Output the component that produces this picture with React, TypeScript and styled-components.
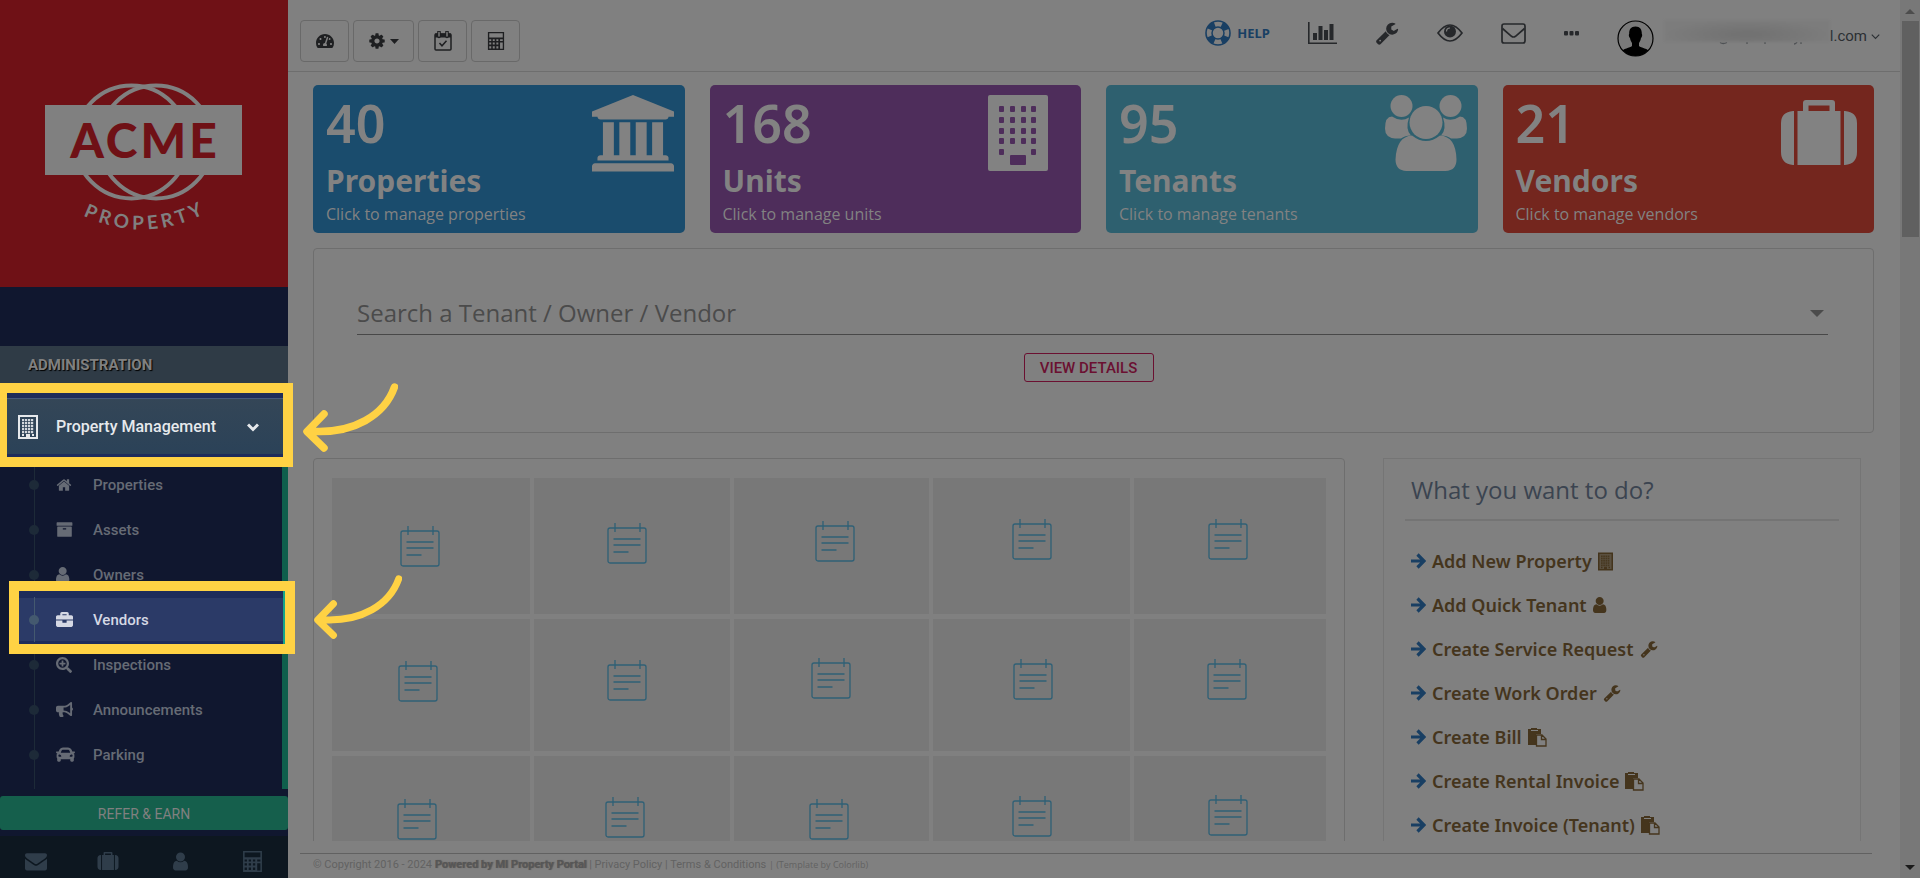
import React from "react";
import styled, { createGlobalStyle } from "styled-components";
import { FaTachometerAlt, FaBriefcase, FaBullhorn, FaCar, FaSearchPlus } from "react-icons/fa";

const sans = `"Noto Sans", "Open Sans", sans-serif`;
const sansText = `"Open Sans", "Noto Sans", sans-serif`;
const roboto = `Roboto, "Liberation Sans", sans-serif`;

const c = {
  page: "#808080",
  navy: "#10172f",
  navyLit: "#1e2c5a",
  line: "#6e6e6e",
  ink: "#1e1f21",
  amber: "#ffd244",
  brown: "#45351d",
  blue: "#193f63",
  crimson: "#6b1031",
};

const GlobalStyle = createGlobalStyle`
  * { box-sizing: border-box; }
  body { margin: 0; background: ${c.page}; font-family: ${roboto}; overflow: hidden; }
  button { font: inherit; color: inherit; padding: 0; margin: 0; border: 0; background: none; cursor: pointer; }
  a { color: inherit; text-decoration: none; }
  ul { list-style: none; margin: 0; padding: 0; }
  svg { display: block; flex: none; }
`;

/* ---------- icons ---------- */

const glyphs = {
  bank: "M960 0l960 384v128h-128q0 26-20.5 45t-48.5 19h-1526q-28 0-48.5-19t-20.5-45h-128v-128zm-704 640h256v768h128v-768h256v768h128v-768h256v768h128v-768h256v768h59q28 0 48.500 19t20.500 45v64h-1664v-64q0-26 20.500-45t48.500-19h59v-768zm1595 960q28 0 48.500 19t20.500 45v128h-1920v-128q0-26 20.500-45t48.500-19h1782z",
  wrench: "M448 1472q0-26-19-45t-45-19-45 19-19 45 19 45 45 19 45-19 19-45zm644-420l-682 682q-37 37-90 37-52 0-91-37l-106-108q-38-36-38-90 0-53 38-91l681-681q39 98 114.500 173.500t173.500 114.500zm634-435q0 39-23 106-47 134-164.500 217.500t-258.500 83.500q-185 0-316.500-131.500t-131.500-316.500 131.500-316.500 316.500-131.500q58 0 121.500 16.500t107.500 46.500q16 11 16 28t-16 28l-293 169v224l193 107q5-3 79-48.500t135.500-81 70.500-35.500q15 0 23.500 10t8.500 25z",
  envelope: "M1792 710v794q0 66-47 113t-113 47h-1472q-66 0-113-47t-47-113v-794q44 49 101 87 362 246 497 345 57 42 92.500 65.500t94.500 48 110 24.500h2q51 0 110-24.500t94.500-48 92.500-65.500q170-123 498-345 57-39 100-87zm0-294q0 79-49 151t-122 123q-376 261-468 325-10 7-42.500 31t-54 38-52 32.500-57.500 27-50 9h-2q-23 0-50-9t-57.500-27-52-32.500-54-38-42.500-31q-91-64-262-182.500t-205-142.500q-62-42-117-115.500t-55-136.500q0-78 41.500-130t118.500-52h1472q65 0 112.500 47t47.500 113z",
  user: "M1536 1399q0 109-62.500 187t-150.500 78h-854q-88 0-150.500-78t-62.500-187q0-85 8.500-160.500t31.500-152 58.500-131 94-89 134.500-34.500q131 128 313 128t313-128q76 0 134.500 34.500t94 89 58.500 131 31.500 152 8.500 160.500zm-256-887q0 159-112.500 271.500t-271.500 112.500-271.500-112.500-112.500-271.500 112.500-271.500 271.500-112.500 271.500 112.500 112.500 271.500z",
  home: "M1472 992v480q0 26-19 45t-45 19h-384v-384h-256v384h-384q-26 0-45-19t-19-45v-480q0-1 .5-3t.5-3l575-474 575 474q1 2 1 6zm223-69l-62 74q-8 9-21 11h-3q-13 0-21-7l-692-577-692 577q-12 8-24 7-13-2-21-11l-62-74q-8-10-7-23.500t11-21.500l719-599q32-26 76-26t76 26l244 204v-195q0-14 9-23t23-9h192q14 0 23 9t9 23v408l219 182q10 8 11 21.500t-7 23.500z",
  archive: "M1088 832q0-26-19-45t-45-19h-256q-26 0-45 19t-19 45 19 45 45 19h256q26 0 45-19t19-45zm576-192v960q0 26-19 45t-45 19h-1408q-26 0-45-19t-19-45v-960q0-26 19-45t45-19h1408q26 0 45 19t19 45zm64-448v256q0 26-19 45t-45 19h-1536q-26 0-45-19t-19-45v-256q0-26 19-45t45-19h1536q26 0 45 19t19 45z",
  cog: "M1152 896q0-106-75-181t-181-75-181 75-75 181 75 181 181 75 181-75 75-181zm512-109v222q0 12-8 23t-20 13l-185 28q-19 54-39 91 35 50 107 138 10 12 10 25t-9 23q-27 37-99 108t-94 71q-12 0-26-9l-138-108q-44 23-91 38-16 136-29 186-7 28-36 28h-222q-14 0-24.500-8.500t-11.500-21.500l-28-184q-49-16-90-37l-141 107q-10 9-25 9-14 0-25-11-126-114-165-168-7-10-7-23 0-12 8-23 15-21 51-66.500t54-70.500q-27-50-41-99l-183-27q-13-2-21-12.500t-8-23.500v-222q0-12 8-23t19-13l186-28q14-46 39-92-40-57-107-138-10-12-10-24 0-10 9-23 26-36 98.500-107.500t94.500-71.500q13 0 26 10l138 107q44-23 91-38 16-136 29-186 7-28 36-28h222q14 0 24.500 8.500t11.500 21.500l28 184q49 16 90 37l142-107q9-9 24-9 13 0 25 10 129 119 165 170 7 8 7 22 0 12-8 23-15 21-51 66.500t-54 70.500q26 50 41 98l183 28q13 2 21 12.500t8 23.500z",
};

const Glyph = ({ name, size, box = "0 0 1792 1792" }: { name: keyof typeof glyphs; size: number; box?: string }) => (
  <svg width={size} height={size} viewBox={box} fill="currentColor" aria-hidden="true">
    <path d={glyphs[name]} />
  </svg>
);

const CalculatorIcon = ({ size }: { size: number }) => (
  <svg width={size} height={size} viewBox="0 0 20 20" fill="currentColor" aria-hidden="true">
    <path fillRule="evenodd" d="M1 0h18v20H1zM2.500 1.500v4.500h15V1.500zM2.500 8v2h2.200V8zm3.900 0v2h2.200V8zm4 0v2h2.200V8zm4.100 0v2h3V8zM2.500 11.600v2.200h2.200v-2.200zm3.900 0v2.200h2.200v-2.200zm4 0v2.200h2.200v-2.200zm4.100 0v6.900h3v-6.900zM2.500 15.700v2.500h2.200v-2.500zm3.900 0v2.500h2.200v-2.500zm4 0v2.500h2.200v-2.500z" />
  </svg>
);

const CalendarCheckIcon = () => (
  <svg width="18" height="20" viewBox="0 0 18 20" fill="none" stroke="currentColor" aria-hidden="true">
    <rect x="1" y="3" width="16" height="16" rx="1" strokeWidth="1.500" />
    <path d="M1 4.500h16" strokeWidth="4" />
    <path d="M5 1v4.500M13 1v4.500" strokeWidth="3.600" strokeLinecap="round" />
    <path d="M5 1.500v3.500M13 1.500v3.500" strokeWidth="1.400" stroke={c.page} strokeLinecap="round" />
    <path d="M5.500 12l2.500 2.800 4.500-5" strokeWidth="1.500" />
  </svg>
);

const BuildingGrid = ({ width, height, solid }: { width: number; height: number; solid?: boolean }) => (
  <svg width={width} height={height} viewBox="0 0 20 24" aria-hidden="true">
    <rect x="1" y="1" width="18" height="22" fill="none" stroke="currentColor" strokeWidth="2" />
    {solid && <rect x="1" y="1" width="18" height="22" fill="currentColor" opacity="0.65" />}
    {[4, 7, 10, 13, 16].map((y) =>
      [4, 7, 10, 13].map((x) => <rect key={`${x}-${y}`} x={x} y={y} width="2.200" height="2.200" fill="currentColor" opacity="0.9" />),
    )}
    <path d="M8 23v-4h4v4zM4 19h2v2H4zM14 19h2v2h-2z" fill="currentColor" />
  </svg>
);

const TowerIcon = () => (
  <svg width="60" height="76" viewBox="0 0 60 76" aria-hidden="true">
    <rect width="60" height="76" rx="2" fill="currentColor" />
    <g fill="#4e2d5b">
      {[11, 22, 33, 43, 54].map((y, row) =>
        [11, 22, 33, 43].map((x, col) =>
          row === 4 && (col === 1 || col === 2) ? null : <rect key={`${x}-${y}`} x={x} y={y} width="5" height="6" rx="1" />,
        ),
      )}
      <rect x="22" y="60" width="16" height="10" rx="1" />
    </g>
  </svg>
);

const GroupIcon = () => (
  <svg width="82" height="76" viewBox="0 0 82 76" fill="currentColor" aria-hidden="true">
    <circle cx="16.500" cy="11" r="11" />
    <circle cx="65.500" cy="11" r="11" />
    <path d="M7 21.500q9 6 17 1q-4 12 2 18q-6 0-10 3H10q-10-1-10-10 0-12 7-12zM75 21.500q-9 6-17 1q4 12-2 18q6 0 10 3h6q10-1 10-10 0-12-7-12z" />
    <circle cx="41" cy="27.500" r="16.500" />
    <path d="M27 40.500q14 11 28 0 16 1 16.500 24 0 11-11 11.500h-39q-11-.5-11-11.500 1-23 16.500-24z" />
  </svg>
);

const SuitcaseIcon = ({ width, height }: { width: number; height: number }) => (
  <svg width={width} height={height} viewBox="0 0 76 65" fill="currentColor" aria-hidden="true">
    <path d="M12 11h1v54h-1q-12-1-12-13V23q0-11 12-12zM64 11h-1v54h1q12-1 12-13V23q0-11-12-12z" />
    <path fillRule="evenodd" d="M16.500 11H22V3q0-3 3-3h26q3 0 3 3v8h5.500v54h-43zM27.500 5.500v5.500h21V5.500z" />
  </svg>
);

const LifeRing = () => (
  <svg width="26" height="26" viewBox="0 0 26 26" fill="none" stroke="currentColor" aria-hidden="true">
    <circle cx="13" cy="13" r="12" strokeWidth="1.600" />
    <circle cx="13" cy="13" r="6" strokeWidth="1.500" />
    <circle cx="13" cy="13" r="9" strokeWidth="6" strokeDasharray="7.070 7.070" strokeDashoffset="-3.530" />
  </svg>
);

const BarChartIcon = () => (
  <svg width="29" height="22" viewBox="0 0 29 22" fill="currentColor" aria-hidden="true">
    <path d="M0 0h1.600v20.400H29V22H0zM5 11h4v7H5zM10.500 4h4v14h-4zM16 8h4v10h-4zM21.500 2h4v16h-4z" />
  </svg>
);

const MailIcon = () => (
  <svg width="25" height="21" viewBox="0 0 25 21" fill="none" stroke="currentColor" strokeWidth="1.700" aria-hidden="true">
    <rect x="1" y="1" width="23" height="19" rx="2" />
    <path d="M1.500 5.500l9 7.800q2 1.400 4 0l9-7.800" />
  </svg>
);

const EyeIcon = () => (
  <svg width="26" height="18" viewBox="0 0 26 18" aria-hidden="true">
    <path d="M1 9q12-16 24 0q-12 16-24 0z" fill="none" stroke="currentColor" strokeWidth="1.700" />
    <circle cx="13" cy="7.500" r="6" fill="currentColor" />
    <path d="M9.500 7.500q0-3.500 3.500-3.500" fill="none" stroke={c.page} strokeWidth="1.200" />
  </svg>
);

const DotsIcon = () => (
  <svg width="15" height="5" viewBox="0 0 15 5" fill="currentColor" aria-hidden="true">
    <rect width="4" height="4.500" rx="1" />
    <rect x="5.500" width="4" height="4.500" rx="1" />
    <rect x="11" width="4" height="4.500" rx="1" />
  </svg>
);

const PasteIcon = () => (
  <svg width="19" height="19" viewBox="0 0 19 19" aria-hidden="true">
    <path d="M0 1h3V0h6v1h4v5H8v11H0z" fill="currentColor" />
    <path d="M3 2.500h7" stroke={c.page} />
    <path d="M8.500 7h5.500l4 4v7H8.500zM13.500 7v4.500H18" fill={c.page} stroke="currentColor" strokeWidth="1.300" />
  </svg>
);

const GoArrow = () => (
  <svg width="15" height="16" viewBox="0 0 15 16" fill="none" stroke="currentColor" strokeWidth="3.200" aria-hidden="true">
    <path d="M0 8h12M6.500 1.500L13 8l-6.500 6.500" />
  </svg>
);

const GlobeTop = () => (
  <svg width="22" height="22" viewBox="0 0 22 22" fill="currentColor" aria-hidden="true">
    <circle cx="11" cy="11" r="11" />
  </svg>
);

const NoteIcon = () => (
  <svg width="40" height="41" viewBox="0 0 40 41" fill="none" stroke="#2f6076" aria-hidden="true">
    <rect x="1" y="5" width="38" height="35" rx="2" strokeWidth="1.300" />
    <path d="M8 0v9M33 0v9" strokeWidth="1.300" />
    <path d="M6.500 16h27M6.500 22h27M6.500 29h15" strokeWidth="1.600" />
  </svg>
);

const Caret = ({ width, height }: { width: number; height: number }) => (
  <svg width={width} height={height} viewBox="0 0 10 6" preserveAspectRatio="none" fill="currentColor" aria-hidden="true">
    <path d="M0 0h10L5 6z" />
  </svg>
);

const Chevron = ({ size, weight }: { size: number; weight: number }) => (
  <svg width={size} height={size} viewBox="0 0 12 12" fill="none" stroke="currentColor" strokeWidth={weight} aria-hidden="true">
    <path d="M1 3.500l5 5 5-5" />
  </svg>
);

const Avatar = () => (
  <svg width="37" height="37" viewBox="0 0 37 37" role="img" aria-label="User">
    <clipPath id="face"><circle cx="18.500" cy="18.500" r="17.500" /></clipPath>
    <circle cx="18.500" cy="18.500" r="17.500" fill="#7a7a7a" stroke="#000" strokeWidth="1.200" />
    <path clipPath="url(#face)" d="M18.500 6.500c5 0 6.500 3.500 6.300 7.500.8 1 .2 3.500-.8 4-.5 3-1.500 4-2 5v3c2 2 9 2 11.500 7V38h-30v-5c2.500-5 9.500-5 11.500-7v-3c-.5-1-1.500-2-2-5-1-.5-1.600-3-.8-4-.2-4 1.300-7.500 6.300-7.500z" />
  </svg>
);

const ArrowSvg = styled.svg<{ $x: number; $y: number }>`
  position: absolute;
  left: ${(p) => p.$x}px;
  top: ${(p) => p.$y}px;
  pointer-events: none;
`;

const PointerArrow = ({ x, y, width, height }: { x: number; y: number; width: number; height: number }) => (
  <ArrowSvg $x={x} $y={y} width={width} height={height} viewBox="0 0 95 69" fill="none" stroke={c.amber} strokeWidth="7.500" strokeLinecap="round" strokeLinejoin="round" aria-hidden="true">
    <path d="M91.500 4C82 31 52 52 5 48M21 31L4 48.500 21 65" />
  </ArrowSvg>
);

/* ---------- frame ---------- */

const Page = styled.div`
  display: flex;
  height: 100vh;
  background: ${c.page};
`;

const Sidebar = styled.aside`
  position: relative;
  z-index: 2;
  display: flex;
  flex-direction: column;
  flex: none;
  width: 288px;
  background: ${c.navy};
`;

const Brand = styled.a`
  height: 287px;
  margin-bottom: 59px;
  background: #6f1116;
`;

const SectionTitle = styled.h2`
  flex: none;
  margin: 0;
  padding: 0 28px;
  height: 37px;
  line-height: 38px;
  background: #2f3b46;
  color: #808080;
  font-size: 15px;
  font-weight: 700;
  text-shadow: 1px 1px 1px #000;
`;

const MenuHead = styled.button`
  position: relative;
  z-index: 2;
  flex: none;
  height: 79px;
  text-align: left;
  display: flex;
`;

const HeadCallout = styled.span`
  display: flex;
  flex: none;
  width: 293px;
  height: 84px;
  border: 10px solid ${c.amber};
  border-left-width: 7px;
  padding: 5px 0 3px;
  background: ${c.navyLit};
`;

const HeadInner = styled.span`
  display: flex;
  align-items: center;
  flex: 1;
  padding: 0 24px 0 11px;
  border-top: 1px solid #46597a;
  background: linear-gradient(#344657, #2b4258);
  color: #e6e9ec;
  font-size: 16px;
  font-weight: 500;

  span { flex: 1; padding-left: 18px; }
`;

const Menu = styled.ul`
  position: relative;
  flex: 1;
  min-height: 0;
  overflow-x: visible;
  overflow-y: clip;
  border-right: 6px solid #0f5f4c;
`;

const Item = styled.li<{ $raised?: boolean }>`
  position: relative;
  z-index: ${(p) => (p.$raised ? 1 : 0)};
  height: 45px;
`;

const Callout = styled.span`
  position: absolute;
  left: 9px;
  top: -16px;
  width: 286px;
  height: 73px;
  border: 10px solid ${c.amber};
  background:
    linear-gradient(#17a589, #17a589) right / 2px 100% no-repeat,
    linear-gradient(${c.navyLit} 7px, #2b3a67 7px, #2b3a67 50px, ${c.navyLit} 50px);
`;

const ItemLink = styled.a<{ $lit?: boolean }>`
  position: relative;
  display: flex;
  align-items: center;
  height: 100%;
  padding-left: 29px;
  font-size: 15px;
  font-weight: 500;
  color: ${(p) => (p.$lit ? "#d5d8e4" : "#666b75")};
`;

const Rail = styled.span<{ $lit?: boolean }>`
  display: flex;
  align-items: center;
  justify-content: center;
  align-self: stretch;
  width: 10px;
  margin-right: 17px;
  color: ${(p) => (p.$lit ? "#44596f" : "#1d2a38")};
  background: linear-gradient(currentColor, currentColor) center / 1px 100% no-repeat;

  &::after {
    content: "";
    width: 10px;
    height: 10px;
    border-radius: 50%;
    background: currentColor;
  }
`;

const ItemIcon = styled.span`
  display: flex;
  width: 37px;
`;

const Refer = styled.button`
  flex: none;
  height: 34px;
  margin: 7px 0 6px;
  padding-top: 2px;
  border-radius: 3px;
  background: #155f4c;
  color: #808080;
  font-size: 14px;
`;

const Dock = styled.nav`
  flex: none;
  display: grid;
  grid-template-columns: repeat(4, 1fr);
  height: 42px;
  padding-top: 8px;
  background: #0d1720;
  color: #2f3d4a;

  a { display: flex; align-items: center; justify-content: center; }
`;

const Main = styled.main`
  flex: 1;
  min-width: 0;
  display: flex;
  flex-direction: column;
`;

const TopBar = styled.header`
  flex: none;
  display: flex;
  justify-content: space-between;
  height: 72px;
  padding: 20px 20px 0 12px;
  border-bottom: 1px solid ${c.line};
`;

const Tools = styled.div`
  display: flex;
  gap: 4px;
`;

const ToolButton = styled.button<{ $wide?: boolean }>`
  display: flex;
  align-items: center;
  justify-content: center;
  gap: 4px;
  width: ${(p) => (p.$wide ? 61 : 49)}px;
  height: 42px;
  border: 1px solid #696969;
  border-radius: 4px;
  color: ${c.ink};
`;

const Links = styled.nav`
  display: flex;
  align-items: flex-start;
  gap: 38px;
  color: #26282b;
`;

const TopLink = styled.a`
  display: flex;
  align-items: center;
  height: 26px;
`;

const HelpLink = styled(TopLink)`
  gap: 6px;
  color: ${c.blue};
  font: 700 13px/26px ${sans};
`;

const Account = styled.button`
  display: flex;
  align-items: flex-start;
  color: #2b2f33;
  font-size: 15px;
  line-height: 32px;
`;

const HiddenAddress = styled.span`
  display: flex;
  flex-direction: column;
  margin-left: 10px;
  color: #4c4f52;
`;

const Redacted = styled.span`
  width: 166px;
  height: 22px;
  background: radial-gradient(ellipse at 50% 65%, #727272 10%, transparent 70%), #7c7c7c;
  filter: blur(1px);
`;

const AccountText = styled.span`
  display: flex;
  align-items: center;
  gap: 4px;
`;

const Body = styled.div`
  flex: 1;
  min-height: 0;
  display: flex;
  flex-direction: column;
  padding: 13px 26px 0 25px;
  overflow: hidden;
`;

const Cards = styled.section`
  flex: none;
  display: grid;
  grid-template-columns: repeat(4, 1fr);
  gap: 25px;
`;

const Card = styled.a<{ $color: string }>`
  display: flex;
  justify-content: space-between;
  height: 148px;
  padding: 10px 12px 0 13px;
  border-radius: 5px;
  background: ${(p) => p.$color};
  color: #828282;
  font-family: ${sansText};
`;

const Count = styled.strong`
  display: block;
  font-family: ${sans};
  font-size: 52px;
  font-weight: 600;
  line-height: 56px;
`;

const CardTitle = styled.span`
  display: block;
  margin-top: 10px;
  font-family: ${sans};
  font-size: 30px;
  line-height: 40px;
  font-weight: 700;
`;

const CardHint = styled.span`
  display: block;
  font-size: 16px;
  line-height: 26px;
`;

const CardArt = styled.span<{ $right: number; $drop: number }>`
  margin-right: ${(p) => p.$right}px;
  padding-top: ${(p) => p.$drop}px;
`;

const Panel = styled.section`
  border: 1px solid ${c.line};
  border-radius: 4px;
`;

const SearchPanel = styled(Panel)`
  flex: none;
  display: flex;
  flex-direction: column;
  align-items: center;
  height: 185px;
  margin-top: 15px;
  padding: 43px 45px 0 43px;
`;

const SearchBox = styled.button`
  display: flex;
  align-items: center;
  justify-content: space-between;
  width: 100%;
  height: 43px;
  padding-right: 4px;
  border-bottom: 1px solid #484848;
  color: #4b4b4b;
  font: 400 24px/42px ${sansText};
`;

const ViewButton = styled.button`
  width: 130px;
  height: 29px;
  margin: 18px 8px 0 0;
  border: 1px solid ${c.crimson};
  border-radius: 3px;
  color: ${c.crimson};
  font-size: 15px;
  font-weight: 500;
`;

const Lower = styled.div`
  flex: 1;
  min-height: 0;
  display: grid;
  grid-template-columns: minmax(0, 1032fr) minmax(0, 478fr);
  gap: 38px;
  margin: 25px 13px 0 0;
  overflow: hidden;
`;

const BoardPanel = styled(Panel)`
  padding: 19px 18px 0;
  height: 460px;
`;

const Board = styled.div`
  display: grid;
  grid-template-columns: 198fr 196fr 196fr 197fr 192fr;
  grid-template-rows: 136px 132px 132px;
  gap: 5px 4px;
`;

const Cell = styled.div`
  position: relative;
  background: #787878;
`;

const Pin = styled.span<{ $x: number; $y: number }>`
  position: absolute;
  left: ${(p) => p.$x}px;
  top: ${(p) => p.$y}px;
`;

const TodoPanel = styled.section`
  height: 460px;
  padding: 14px 21px 0;
  border: 1px solid #757575;
`;

const TodoTitle = styled.h2`
  margin: 0 0 18px;
  padding: 0 6px;
  height: 48px;
  border-bottom: 2px solid #747474;
  color: #3b4450;
  font: 400 24px/34px ${sansText};
`;

const TodoLink = styled.a`
  display: flex;
  align-items: center;
  gap: 6px;
  height: 44px;
  padding-left: 6px;
  color: ${c.brown};
  font: 600 18px/44px ${sans};

  svg:first-child { color: ${c.blue}; }
`;

const Footer = styled.footer`
  flex: none;
  height: 25px;
  margin: 12px 28px 0 12px;
  padding-left: 13px;
  border-top: 1px solid #616161;
  color: #626262;
  font-size: 11px;
  line-height: 22px;

  strong { color: #565656; text-shadow: 1px 0 1px #5a5a5a; }
  small { font: 400 9px/22px ${sansText}; }
`;

const ScrollTrack = styled.div`
  flex: 0 0 20px;
  display: flex;
  flex-direction: column;
  align-items: center;
  padding: 9px 0 8px;
  background: #787878;
  color: #4d4d4d;
`;

const ScrollThumb = styled.div`
  width: 17px;
  height: 216px;
  margin: 7px 0 auto;
  background: #606060;
`;

const UpCaret = styled.span`
  transform: rotate(180deg);
`;

const DownCaret = styled.span`
  color: #1a1a1a;
`;

/* ---------- content ---------- */

const menu = [
  { label: "Properties", icon: <Glyph name="home" size={16} box="0 128 1792 1536" /> },
  { label: "Assets", icon: <Glyph name="archive" size={17} /> },
  { label: "Owners", icon: <Glyph name="user" size={16} box="256 128 1536 1536" /> },
  { label: "Vendors", icon: <FaBriefcase size={17} />, lit: true },
  { label: "Inspections", icon: <FaSearchPlus size={16} /> },
  { label: "Announcements", icon: <FaBullhorn size={17} /> },
  { label: "Parking", icon: <FaCar size={19} /> },
];

const cards = [
  { count: 40, title: "Properties", hint: "Click to manage properties", color: "#1a4c6d", right: -1, drop: 0, art: <Glyph name="bank" size={82} box="0 0 1920 1920" /> },
  { count: 168, title: "Units", hint: "Click to manage units", color: "#4e2d5b", right: 21, drop: 0, art: <TowerIcon /> },
  { count: 95, title: "Tenants", hint: "Click to manage tenants", color: "#2e606f", right: -1, drop: 0, art: <GroupIcon /> },
  { count: 21, title: "Vendors", hint: "Click to manage vendors", color: "#74261e", right: 5, drop: 5, art: <SuitcaseIcon width={76} height={65} /> },
];

const pins = [
  [68, 48], [73, 45], [81, 43], [79, 41], [74, 41],
  [66, 42], [73, 41], [77, 39], [80, 40], [73, 40],
  [65, 43], [71, 41], [75, 43], [79, 40], [74, 39],
];

const todos = [
  { label: "Add New Property", icon: <BuildingGrid width={15} height={19} solid /> },
  { label: "Add Quick Tenant", icon: <Glyph name="user" size={16} box="256 128 1536 1536" /> },
  { label: "Create Service Request", icon: <Glyph name="wrench" size={18} /> },
  { label: "Create Work Order", icon: <Glyph name="wrench" size={18} /> },
  { label: "Create Bill", icon: <PasteIcon /> },
  { label: "Create Rental Invoice", icon: <PasteIcon /> },
  { label: "Create Invoice (Tenant)", icon: <PasteIcon /> },
];

const Logo = () => (
  <svg width="287" height="287" viewBox="0 0 287 287" role="img" aria-label="Acme Property">
    <g fill="none" stroke="#808080" strokeWidth="4">
      <circle cx="131.500" cy="142" r="56.500" />
      <circle cx="156" cy="142" r="56.500" />
    </g>
    <rect x="45" y="105" width="197" height="70" fill="#808080" />
    <text x="145" y="158" textAnchor="middle" fontFamily="Lato, sans-serif" fontWeight="900" fontSize="48" letterSpacing="3" fill="#6f1116">ACME</text>
    <path id="smile" d="M82 215Q143 245 206 213" fill="none" />
    <text fontFamily="Lato, sans-serif" fontWeight="700" fontSize="19" letterSpacing="4" fill="#808080">
      <textPath href="#smile" startOffset="51%" textAnchor="middle">PROPERTY</textPath>
    </text>
  </svg>
);

export default function App() {
  return (
    <Page>
      <GlobalStyle />
      <Sidebar>
        <Brand href="#"><Logo /></Brand>
        <SectionTitle>ADMINISTRATION</SectionTitle>
        <MenuHead type="button">
          <HeadCallout>
            <HeadInner>
              <BuildingGrid width={20} height={24} />
              <span>Property Management</span>
              <Chevron size={12} weight={3} />
            </HeadInner>
          </HeadCallout>
          <PointerArrow x={303} y={0} width={95} height={69} />
        </MenuHead>
        <Menu>
          {menu.map((m) => (
            <Item key={m.label} $raised={m.lit}>
              {m.lit && <Callout />}
              {m.lit && <PointerArrow x={314} y={-22} width={88} height={64} />}
              <ItemLink href="#" $lit={m.lit}>
                <Rail $lit={m.lit} />
                <ItemIcon>{m.icon}</ItemIcon>
                {m.label}
              </ItemLink>
            </Item>
          ))}
          <Item>
            <ItemLink href="#" aria-label="Communities"><Rail /><ItemIcon><GlobeTop /></ItemIcon></ItemLink>
          </Item>
        </Menu>
        <Refer type="button">REFER &amp; EARN</Refer>
        <Dock>
          <a href="#" aria-label="Messages"><Glyph name="envelope" size={22} /></a>
          <a href="#" aria-label="Vendors"><SuitcaseIcon width={22} height={18} /></a>
          <a href="#" aria-label="Account"><Glyph name="user" size={21} /></a>
          <a href="#" aria-label="Calculator"><CalculatorIcon size={21} /></a>
        </Dock>
      </Sidebar>

      <Main>
        <TopBar>
          <Tools>
            <ToolButton type="button" aria-label="Dashboard"><FaTachometerAlt size={18} /></ToolButton>
            <ToolButton type="button" aria-label="Settings" $wide><Glyph name="cog" size={18} /><Caret width={9} height={5} /></ToolButton>
            <ToolButton type="button" aria-label="Calendar"><CalendarCheckIcon /></ToolButton>
            <ToolButton type="button" aria-label="Calculator"><CalculatorIcon size={18} /></ToolButton>
          </Tools>
          <Links>
            <HelpLink href="#"><LifeRing />HELP</HelpLink>
            <TopLink href="#" aria-label="Reports"><BarChartIcon /></TopLink>
            <TopLink href="#" aria-label="Service"><Glyph name="wrench" size={24} /></TopLink>
            <TopLink href="#" aria-label="View"><EyeIcon /></TopLink>
            <TopLink href="#" aria-label="Mail"><MailIcon /></TopLink>
            <TopLink href="#" aria-label="More"><DotsIcon /></TopLink>
            <Account type="button">
              <Avatar />
              <HiddenAddress>
                <Redacted />
                <svg width="166" height="3" viewBox="0 0 166 3" fill="none" stroke="currentColor" aria-hidden="true">
                  <path d="M56 .5q3 2 7 0M83 0v2M101 0v2M130 2q2 0 3-2M137 0v2" strokeWidth="1.300" />
                </svg>
              </HiddenAddress>
              <AccountText>l.com <Chevron size={9} weight={1.5} /></AccountText>
            </Account>
          </Links>
        </TopBar>

        <Body>
          <Cards>
            {cards.map((k) => (
              <Card key={k.title} href="#" $color={k.color}>
                <span>
                  <Count>{k.count}</Count>
                  <CardTitle>{k.title}</CardTitle>
                  <CardHint>{k.hint}</CardHint>
                </span>
                <CardArt $right={k.right} $drop={k.drop}>{k.art}</CardArt>
              </Card>
            ))}
          </Cards>

          <SearchPanel>
            <SearchBox type="button">
              Search a Tenant / Owner / Vendor
              <Caret width={14} height={7} />
            </SearchBox>
            <ViewButton type="button">VIEW DETAILS</ViewButton>
          </SearchPanel>

          <Lower>
            <BoardPanel>
              <Board>
                {pins.map(([x, y], i) => (
                  <Cell key={i}><Pin $x={x} $y={y}><NoteIcon /></Pin></Cell>
                ))}
              </Board>
            </BoardPanel>
            <TodoPanel>
              <TodoTitle>What you want to do?</TodoTitle>
              <ul>
                {todos.map((t) => (
                  <li key={t.label}>
                    <TodoLink href="#"><GoArrow />{t.label}{t.icon}</TodoLink>
                  </li>
                ))}
              </ul>
            </TodoPanel>
          </Lower>
        </Body>

        <Footer>
          © Copyright 2016 - 2024 <strong>Powered by MI Property Portal</strong> | <a href="#">Privacy Policy</a> | <a href="#">Terms &amp; Conditions</a> <small>| (Template by Colorlib)</small>
        </Footer>
      </Main>

      <ScrollTrack>
        <UpCaret><Caret width={10} height={5} /></UpCaret>
        <ScrollThumb />
        <DownCaret><Caret width={10} height={5} /></DownCaret>
      </ScrollTrack>
    </Page>
  );
}
